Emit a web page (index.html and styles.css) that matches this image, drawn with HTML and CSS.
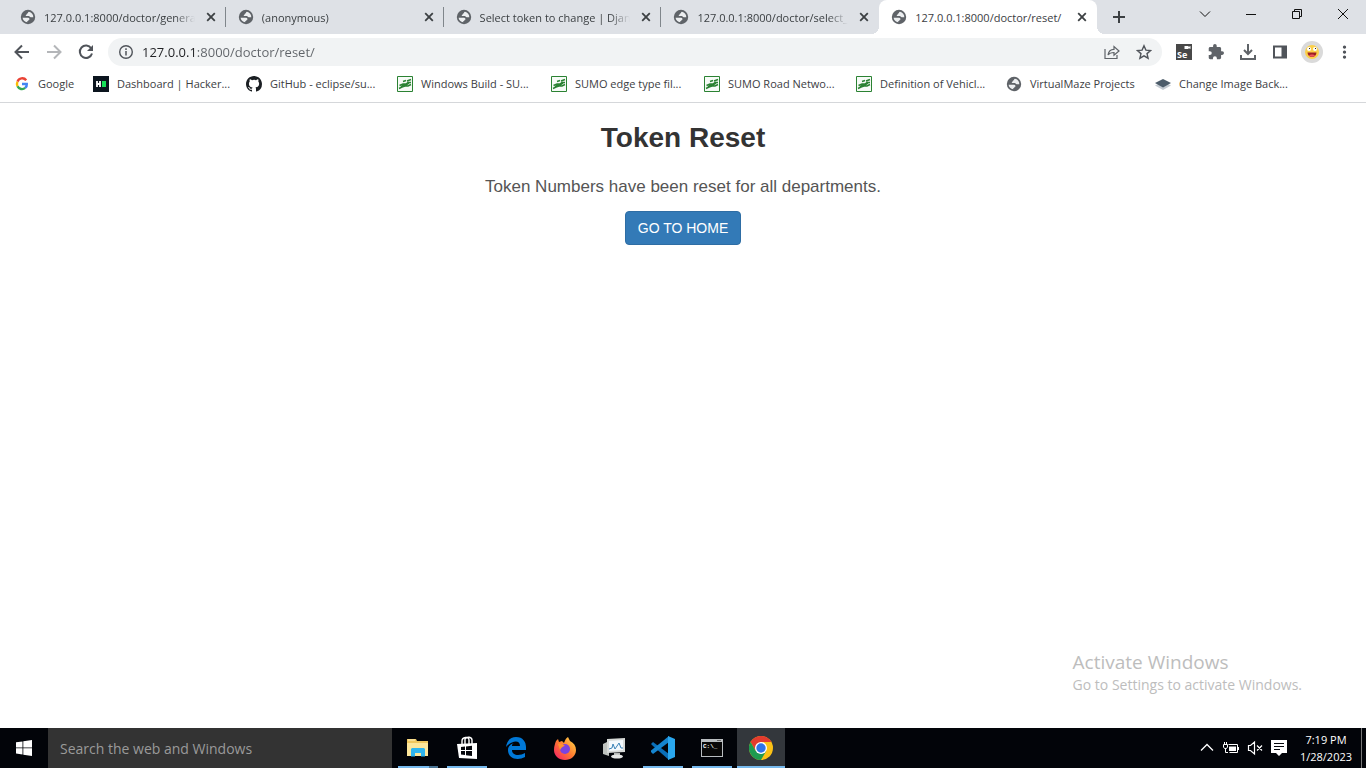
FILE: index.html
```html
<!DOCTYPE html>
<html lang="en">
<head>
<meta charset="utf-8">
<title>Token Reset</title>
<link rel="stylesheet" href="styles.css">
</head>
<body>
<svg class="defs" aria-hidden="true">
  <defs>
    <symbol id="globe" viewBox="0 0 16 16"><circle cx="8" cy="8" r="7.200" fill="#5f6368"/><path d="M9 2.800c-1.200.3-.6 1.200-1.600 1.600-.9.300-.5 1.300-1.400 1.500-.6.300-.2 1 .4 1h2.400c1 0 1 1.300 1.900 1.300h2.600c.1-2.600-1.700-5-4.300-5.400zM2.600 8.800c.3 2.300 2.100 4.200 4.700 4.500v-1.400c.9 0 1.300-.5 1.300-1 .7-.1.900-.5.900-1 0-.7-1-1.100-2.300-1.100z" fill="#eceef0"/></symbol>
    <symbol id="close" viewBox="0 0 16 16"><path d="M4.200 4.200l7.600 7.600M11.800 4.200l-7.600 7.600" stroke="#3c4043" stroke-width="1.800"/></symbol>
    <symbol id="sumo" viewBox="0 0 16 16"><path d="M.5.5h15v15H.5z" fill="#f7fbf7" stroke="#2b8233"/><path d="M2 12.500l3-1.500 3-1h3l3-1.500M2.500 9.500L6 8h3l2-1.500h3M6 5.500l3-1M10 5l4-1.500M4 11l5-3M8 10l4-3" fill="none" stroke="#2b8233" stroke-width="1.500"/></symbol>
  </defs>
</svg>

<header class="browser">
  <div class="tabstrip">
    <div class="tabs">
      <div class="tab"><svg class="i16"><use href="#globe"/></svg><span class="tab-title">127.0.0.1:8000/doctor/genera</span><button class="close" aria-label="Close tab"><svg class="i16"><use href="#close"/></svg></button></div>
      <div class="tab"><svg class="i16"><use href="#globe"/></svg><span class="tab-title">(anonymous)</span><button class="close" aria-label="Close tab"><svg class="i16"><use href="#close"/></svg></button></div>
      <div class="tab"><svg class="i16"><use href="#globe"/></svg><span class="tab-title">Select token to change | Djan</span><button class="close" aria-label="Close tab"><svg class="i16"><use href="#close"/></svg></button></div>
      <div class="tab"><svg class="i16"><use href="#globe"/></svg><span class="tab-title">127.0.0.1:8000/doctor/select_</span><button class="close" aria-label="Close tab"><svg class="i16"><use href="#close"/></svg></button></div>
      <div class="tab active"><svg class="i16"><use href="#globe"/></svg><span class="tab-title">127.0.0.1:8000/doctor/reset/</span><button class="close" aria-label="Close tab"><svg class="i16"><use href="#close"/></svg></button></div>
    </div>
    <button class="new-tab" aria-label="New tab"><svg class="i16" viewBox="0 0 16 16"><path d="M8 2v12M2 8h12" stroke="#3c4043" stroke-width="2"/></svg></button>
    <div class="window-controls">
      <button aria-label="Search tabs"><svg class="i16" viewBox="0 0 16 16"><path d="M3 5.500l5 5 5-5" fill="none" stroke="#111"/></svg></button>
      <button aria-label="Minimize"><svg class="i16" viewBox="0 0 16 16"><path d="M3 8.500h10" stroke="#111"/></svg></button>
      <button aria-label="Restore"><svg class="i16" viewBox="0 0 16 16"><path d="M3.500 5.500h7v7h-7zM5.500 5.500v-2h7v7h-2" fill="none" stroke="#111"/></svg></button>
      <button aria-label="Close window"><svg class="i16" viewBox="0 0 16 16"><path d="M3 3l10 10M13 3L3 13" stroke="#111"/></svg></button>
    </div>
  </div>

  <div class="toolbar">
    <div class="navigation">
      <button aria-label="Back"><svg class="i16" viewBox="0 0 16 16"><path d="M15 8H2M8 1.500L1.500 8 8 14.500" fill="none" stroke="#50545a" stroke-width="2"/></svg></button>
      <button aria-label="Forward"><svg class="i16" viewBox="0 0 16 16"><path d="M1 8h13M8 1.500L14.500 8 8 14.500" fill="none" stroke="#b4b6b9" stroke-width="2"/></svg></button>
      <button aria-label="Reload"><svg class="i16" viewBox="0 0 16 16"><path d="M13.200 4.300A6.200 6.200 0 1 0 14 9.500" fill="none" stroke="#50545a" stroke-width="2"/><path d="M15 1v6H9z" fill="#50545a"/></svg></button>
    </div>
    <div class="omnibox">
      <svg class="i16" viewBox="0 0 16 16"><circle cx="8" cy="8" r="6.300" fill="none" stroke="#50545a" stroke-width="1.400"/><path d="M8 7v4.500M8 4.300v1.600" stroke="#50545a" stroke-width="1.500"/></svg>
      <input class="url" type="text" aria-label="Address" value="127.0.0.1:8000/doctor/reset/">
      <button aria-label="Share"><svg class="i16" viewBox="0 0 16 16"><path d="M1 5v9.500h12V11M4 11c.6-4 3-5.700 6-5.700V2.500L15 7l-5 4.200V8.500C7.500 8.500 5.500 9 4 11z" fill="none" stroke="#5f6368" stroke-width="1.200"/></svg></button>
      <button aria-label="Bookmark"><svg class="i16" viewBox="0 0 16 16"><path d="M8 1.800l1.900 4.300 4.700.4-3.600 3.100 1.100 4.600L8 11.800l-4.100 2.400L5 9.600 1.400 6.500l4.700-.4z" fill="none" stroke="#50545a" stroke-width="1.400"/></svg></button>
    </div>
    <div class="extensions">
      <button aria-label="Selenium IDE"><svg class="i16" viewBox="0 0 16 16"><path d="M0 0h16v16H0z" fill="#484848"/><path d="M8.500 2h4v1l2-1v3l-2-1v1h-4z" fill="#fff"/><text class="se" x="1" y="14">Se</text></svg></button>
      <button aria-label="Extensions"><svg class="i16" viewBox="1 1 22 22"><path fill="#5f6368" d="M20.500 11H19V7c0-1.100-.9-2-2-2h-4V3.500a2.500 2.500 0 0 0-5 0V5H4c-1.100 0-2 .9-2 2v3.800h1.500a2.700 2.700 0 0 1 0 5.400H2V20c0 1.100.9 2 2 2h3.800v-1.500a2.700 2.700 0 0 1 5.400 0V22H17c1.100 0 2-.9 2-2v-4h1.500a2.500 2.500 0 0 0 0-5z"/></svg></button>
      <button aria-label="Downloads"><svg class="i16" viewBox="0 0 16 16"><path d="M8 0v9.500M4 6l4 4 4-4M1 11v4h14v-4" fill="none" stroke="#5f6368" stroke-width="2"/></svg></button>
      <button aria-label="Side panel"><svg class="i16" viewBox="0 0 16 16"><path d="M2 2.500h12v11H2z" fill="#fff" stroke="#50545a" stroke-width="2"/><path d="M9.500 2h5v12h-5z" fill="#50545a"/></svg></button>
      <button aria-label="Profile"><svg class="i22" viewBox="0 0 22 22"><circle cx="11" cy="11" r="11" fill="#dadada"/><circle cx="11" cy="11" r="7" fill="#fbd04a"/><circle cx="8" cy="8" r="2" fill="#fff"/><circle cx="14" cy="8" r="2" fill="#fff"/><path d="M8 7.500h1M14 7.500h1" stroke="#222"/><path d="M6.500 11.500h9c0 2.500-2 4.500-4.500 4.500s-4.500-2-4.500-4.500z" fill="#9c1f22"/><path d="M8 14.700c1-1.500 5-1.500 6 0-1.500 1.500-4.500 1.500-6 0z" fill="#f0565b"/></svg></button>
      <button aria-label="Menu"><svg class="i16" viewBox="0 0 16 16"><path d="M8.500 1.500a1.600 1.600 0 1 0 .01 0zM8.500 6.500a1.600 1.600 0 1 0 .01 0zM8.500 11.500a1.600 1.600 0 1 0 .01 0z" fill="#50545a"/></svg></button>
    </div>
  </div>

  <nav class="bookmarks" aria-label="Bookmarks">
    <a href="#"><svg class="i16" viewBox="0 0 16 16"><g fill="none" stroke-width="2.400"><path d="M12.200 4.300A5 5 0 0 0 3.500 5.700" stroke="#ea4335"/><path d="M3.500 5.700a5 5 0 0 0 0 4.600" stroke="#fbbc05"/><path d="M3.500 10.300a5 5 0 0 0 7.700 1.600" stroke="#34a853"/><path d="M11.200 11.900A4.500 4.500 0 0 0 12.800 8H8" stroke="#4285f4"/></g></svg>Google</a>
    <a href="#"><svg class="i16" viewBox="0 0 16 16"><path d="M0 0h16v16H0z" fill="#0b141e"/><path d="M4 5v6M7 5v6M4 8h3" stroke="#fff" stroke-width="1.800"/><path d="M9 5h4v6H9z" fill="#16e058"/></svg>Dashboard | Hacker...</a>
    <a href="#"><svg class="i16" viewBox="0 0 16 16"><path fill="#1b1f23" d="M8 0C3.580 0 0 3.580 0 8c0 3.540 2.290 6.530 5.470 7.590.4.070.55-.17.55-.38 0-.19-.01-.82-.01-1.490-2.010.37-2.530-.49-2.690-.94-.09-.23-.48-.94-.82-1.130-.28-.15-.68-.52-.01-.53.63-.01 1.080.58 1.230.82.72 1.210 1.870.87 2.330.66.07-.52.28-.87.51-1.070-1.780-.2-3.640-.89-3.640-3.950 0-.87.31-1.590.82-2.150-.08-.2-.36-1.020.08-2.120 0 0 .67-.21 2.200.82a7.600 7.600 0 0 1 4 0c1.530-1.040 2.200-.82 2.200-.82.44 1.100.16 1.920.08 2.120.51.56.82 1.270.82 2.150 0 3.070-1.870 3.750-3.650 3.950.29.25.54.73.54 1.480 0 1.070-.01 1.930-.01 2.200 0 .21.15.46.55.38A8 8 0 0 0 16 8c0-4.420-3.580-8-8-8z"/></svg>GitHub - eclipse/su...</a>
    <a href="#"><svg class="i16"><use href="#sumo"/></svg>Windows Build - SU...</a>
    <a href="#"><svg class="i16"><use href="#sumo"/></svg>SUMO edge type fil...</a>
    <a href="#"><svg class="i16"><use href="#sumo"/></svg>SUMO Road Netwo...</a>
    <a href="#"><svg class="i16"><use href="#sumo"/></svg>Definition of Vehicl...</a>
    <a href="#"><svg class="i16"><use href="#globe"/></svg>VirtualMaze Projects</a>
    <a href="#"><svg class="i16" viewBox="0 0 16 16"><path d="M0 9.500l8-4 8 4-8 4.500z" fill="#c3cad1"/><path d="M0 7l8-4 8 4-8 4.500z" fill="#4c5c6a"/></svg>Change Image Back...</a>
  </nav>
</header>

<main class="page">
  <h1>Token Reset</h1>
  <p>Token Numbers have been reset for all departments.</p>
  <a class="btn" href="#">GO TO HOME</a>
</main>

<aside class="activation">
  <p class="activation-title">Activate Windows</p>
  <p>Go to Settings to activate Windows.</p>
</aside>

<footer class="taskbar">
  <button class="start" aria-label="Start"><svg class="i16" viewBox="0 0 16 16"><path d="M0 2.300l6.500-.9v6.100H0zM7.300 1.300L16 0v7.500H7.300zM0 8.300h6.500v6.200L0 13.600zM7.300 8.300H16V16l-8.700-1.300z" fill="#fff"/></svg></button>
  <input class="search" type="text" aria-label="Search" placeholder="Search the web and Windows">
  <div class="apps">
    <button class="app running multi" aria-label="File Explorer"><svg class="i24" viewBox="0 0 24 24"><path d="M1 3h9l1 2h11v15H1z" fill="#f0c75e"/><path d="M2 4h7" stroke="#fff3c4"/><path d="M1 7h21v13H1z" fill="#fde69b"/><path d="M5 20.500V13l1-1h12l1 1v7.500h-4V17H9v3.500z" fill="#2fb5ee"/></svg></button>
    <button class="app running" aria-label="Store"><svg class="i24" viewBox="0 0 24 24"><path d="M7 9V5c0-4 7-5 7-1v4M10 8V3c2-3 7-2 7 1v4" fill="none" stroke="#fff" stroke-width="1.400"/><path d="M2 8l20-1v16L4 22z" fill="#fff"/><path d="M6 11l4-.5V14H6zM11 10.500l6-.8V14h-6zM6 15h4v4l-4-.5zM11 15h6v5l-6-.8z" fill="#05070c"/></svg></button>
    <button class="app" aria-label="Edge"><svg class="i24" viewBox="0 0 24 24"><path d="M2 11C3 4 7 1 12 1c7 0 10 5 10 10v3H8c0 6 8 6 13 3v4c-7 4-17 2-17-7 0-4 3-6 6-7-2 1-2 2-2 3h8c0-7-9-5-14 1z" fill="#0078d7"/></svg></button>
    <button class="app" aria-label="Firefox"><svg class="i24" viewBox="0 0 24 24"><defs><linearGradient id="ff" x1="1" y1="0" x2="0" y2="1"><stop offset="0" stop-color="#ffe14a"/><stop offset=".5" stop-color="#ff7a2f"/><stop offset="1" stop-color="#f5156c"/></linearGradient></defs><path d="M3 5l2-2 1 3 3-1 2 2c1-3 2-5 4-6l2 4c4 2 6 5 6 9 0 6-5 10-11 10S1 20 1 14c0-4 1-6 2-9z" fill="url(#ff)"/><circle cx="12" cy="13" r="5" fill="#7a43e0"/><path d="M5 8c3-1 5 0 7 2-2 0-3 1-5 4z" fill="#ff9130"/></svg></button>
    <button class="app" aria-label="Resource Monitor"><svg class="i24" viewBox="0 0 24 24"><path d="M1 8l6-3v15l-6-2z" fill="#bfc3bf"/><path d="M5 3l18-1v14L5 17z" fill="#d7dad8"/><path d="M7 5l14-1v10L7 15z" fill="#f4f9fd"/><path d="M7 13l3-1 1-4 2 5 2-3 2-3 2 5h2" fill="none" stroke="#3b83b8"/><path d="M12 17h6v4h-6z" fill="#b5b8b6"/><ellipse cx="15" cy="20.500" rx="6" ry="2" fill="#e4e6e5"/></svg></button>
    <button class="app running" aria-label="Visual Studio Code"><svg class="i24" viewBox="0 0 24 24"><path d="M0 8l2-2 16 12V24L2 10z" fill="#0a6fb8"/><path d="M0 16l2 2L18 6V0L0 14.500z" fill="#1585cf"/><path d="M17 0l7 3v18l-7 3z" fill="#2aa7ee"/></svg></button>
    <button class="app running" aria-label="Command Prompt"><svg class="i24" viewBox="0 0 24 24"><path d="M1 3h22v18H1z" fill="#b9bdc0"/><path d="M2 6h20v14H2z" fill="#080808"/><path d="M17 4.500h4" stroke="#666"/><text class="cmd" x="3" y="12">C:\_</text></svg></button>
    <button class="app running current" aria-label="Chrome"><svg class="i24" viewBox="0 0 24 24"><circle cx="12" cy="12" r="12" fill="#fbc116"/><path d="M1.600 6A12 12 0 0 1 22.400 6H12L6.800 15z" fill="#e33b2e"/><path d="M1.600 6A12 12 0 0 0 12 24l5.200-9H6.800z" fill="#1e9b50"/><circle cx="12" cy="12" r="6" fill="#fff"/><circle cx="12" cy="12" r="4.700" fill="#2f73e8"/></svg></button>
  </div>
  <div class="tray">
    <svg class="i16" viewBox="0 0 16 16"><path d="M2 10.500l6-6 6 6" fill="none" stroke="#fff" stroke-width="1.300"/></svg>
    <svg class="i16" viewBox="0 0 16 16"><path d="M5.500 4.500h9v8h-8M15.500 7v3M.5 4.500h4V7l-1 1.500h-2L.5 7zM1.500 4.500V2M3.500 4.500V2M2.500 8.500v4H5" fill="none" stroke="#fff"/><path d="M6 6.500h7V11H6z" fill="#fff"/></svg>
    <svg class="i16" viewBox="0 0 16 16"><path d="M1.500 5.500h2l4-3.500v12l-4-3.500h-2zM10 5.500l5 5M15 5.500l-5 5" fill="none" stroke="#fff" stroke-width="1.200"/></svg>
    <svg class="i16" viewBox="0 0 16 16"><path d="M0 0h16v13h-5l-3 3-3-3H0z" fill="#fff"/><path d="M3 3.500h10M3 6.500h10M3 9.500h6" stroke="#05070c"/></svg>
    <div class="clock"><span>7:19 PM</span><span>1/28/2023</span></div>
  </div>
</footer>
</body>
</html>
```

FILE: styles.css
```css
* { box-sizing: border-box; }

body {
  margin: 0;
  min-height: 100vh;
  display: flex;
  flex-direction: column;
  background: #fff;
  font-family: "Open Sans", "Noto Sans", sans-serif;
  font-size: 11px;
  color: #3c4043;
}

.defs { position: absolute; width: 0; height: 0; }

button {
  display: flex;
  align-items: center;
  justify-content: center;
  padding: 0;
  border: 0;
  background: none;
}

svg { flex: none; display: block; }
.i16 { width: 16px; height: 16px; }
.i22 { width: 22px; height: 22px; }
.i24 { width: 24px; height: 24px; }
.se { font: bold 9px "Open Sans", sans-serif; fill: #fff; }
.cmd { font: bold 6px "Liberation Mono", monospace; fill: #fff; }

/* Browser window */
.browser { border-bottom: 1px solid #d5d7da; }

.tabstrip {
  display: flex;
  height: 34px;
  padding-left: 8px;
  background: #dee1e6;
}

.tabs { display: flex; flex: 0 1 1089px; min-width: 0; }

.tab {
  flex: 1;
  min-width: 0;
  display: flex;
  align-items: center;
  gap: 8px;
  padding: 0 7px 0 12px;
  background: linear-gradient(#80868b, #80868b) right center / 1px 20px no-repeat;
}

.tab:nth-last-child(2) { background: none; }

.tab.active {
  position: relative;
  background: #fff;
  border-radius: 8px 8px 0 0;
}

.tab.active::before,
.tab.active::after {
  content: "";
  position: absolute;
  bottom: 0;
  width: 8px;
  height: 8px;
}

.tab.active::before { right: 100%; background: radial-gradient(circle at 0 0, #dee1e6 8px, #fff 8px); }
.tab.active::after { left: 100%; background: radial-gradient(circle at 100% 0, #dee1e6 8px, #fff 8px); }

.tab-title {
  flex: 1;
  overflow: hidden;
  white-space: nowrap;
  -webkit-mask-image: linear-gradient(to left, transparent, #000 20px);
  mask-image: linear-gradient(to left, transparent, #000 20px);
}

.tab.active .tab-title { -webkit-mask-image: none; mask-image: none; }
.close { width: 16px; }
.new-tab { width: 44px; }

.window-controls { display: flex; margin-left: auto; height: 28px; }
.window-controls button { width: 46px; }

.toolbar {
  display: flex;
  align-items: center;
  gap: 14px;
  padding: 4px 14px;
}

.navigation { display: flex; gap: 16px; }

.omnibox {
  flex: 1;
  display: flex;
  align-items: center;
  gap: 16px;
  height: 28px;
  padding: 0 10px;
  border-radius: 14px;
  background: #f1f3f4;
}

.url {
  flex: 1;
  min-width: 0;
  height: 28px;
  margin-left: -8px;
  padding: 0;
  border: 0;
  font: 13px "Open Sans", sans-serif;
  color: transparent;
  background: linear-gradient(90deg, #202124 54px, #5f6368 54px);
  -webkit-background-clip: text;
  background-clip: text;
}

.extensions { display: flex; align-items: center; gap: 16px; }
.extensions .i22 { margin: 0 -3px; }

.bookmarks {
  display: grid;
  grid-template-columns: 79px 153px 151px 154px 153px 152px 150px 149px 1fr;
  align-items: center;
  height: 32px;
  padding: 0 14px 4px;
}

.bookmarks a {
  display: flex;
  align-items: center;
  gap: 8px;
  color: #3c4043;
  line-height: 14px;
  text-decoration: none;
  white-space: nowrap;
}

/* Page */
.page {
  flex: 1;
  padding-top: 19px;
  font-family: "Liberation Sans", Arial, sans-serif;
  text-align: center;
}

h1 {
  margin: 0 0 24px;
  font-size: 28px;
  line-height: 31px;
  color: #333;
}

.page p {
  margin: 0 0 14px;
  font-size: 17px;
  line-height: 20px;
  color: #555;
}

.btn {
  display: inline-block;
  padding: 6px 12px;
  border: 1px solid #2e6da4;
  border-radius: 4px;
  background: #337ab7;
  color: #fff;
  font-size: 14px;
  line-height: 20px;
  text-decoration: none;
}

.activation {
  align-self: flex-end;
  padding: 0 64px 33px 0;
  color: #bdbdbd;
  font-size: 14px;
  line-height: 20px;
}

.activation p { margin: 0; }
.activation .activation-title { font-size: 19px; line-height: 26px; }

/* Taskbar */
.taskbar { display: flex; height: 40px; background: #020409; }
.start { width: 48px; }

.search {
  flex: 0 1 344px;
  min-width: 0;
  padding: 0 12px;
  border: 0;
  background: #333;
  color: #fff;
  font: 14px "Open Sans", sans-serif;
}

.search::placeholder { color: #9a9a9a; }

.apps { display: flex; gap: 1px; padding-left: 2px; }

.app {
  width: 48px;
  background: linear-gradient(#76b9ed, #76b9ed) center bottom / 40px 2px no-repeat;
}

.app:not(.running) { background: none; }
.app.multi { background-image: linear-gradient(90deg, #76b9ed 31px, #4a7494 31px); }
.app.current { background-color: #33373c; background-size: 100% 2px; }

.tray {
  display: flex;
  align-items: center;
  gap: 8px;
  margin-left: auto;
  margin-right: 4px;
  border-right: 1px solid #777;
  color: #fff;
}

.clock {
  display: flex;
  flex-direction: column;
  align-items: center;
  width: 66px;
  padding-right: 4px;
  line-height: 17px;
}
```
